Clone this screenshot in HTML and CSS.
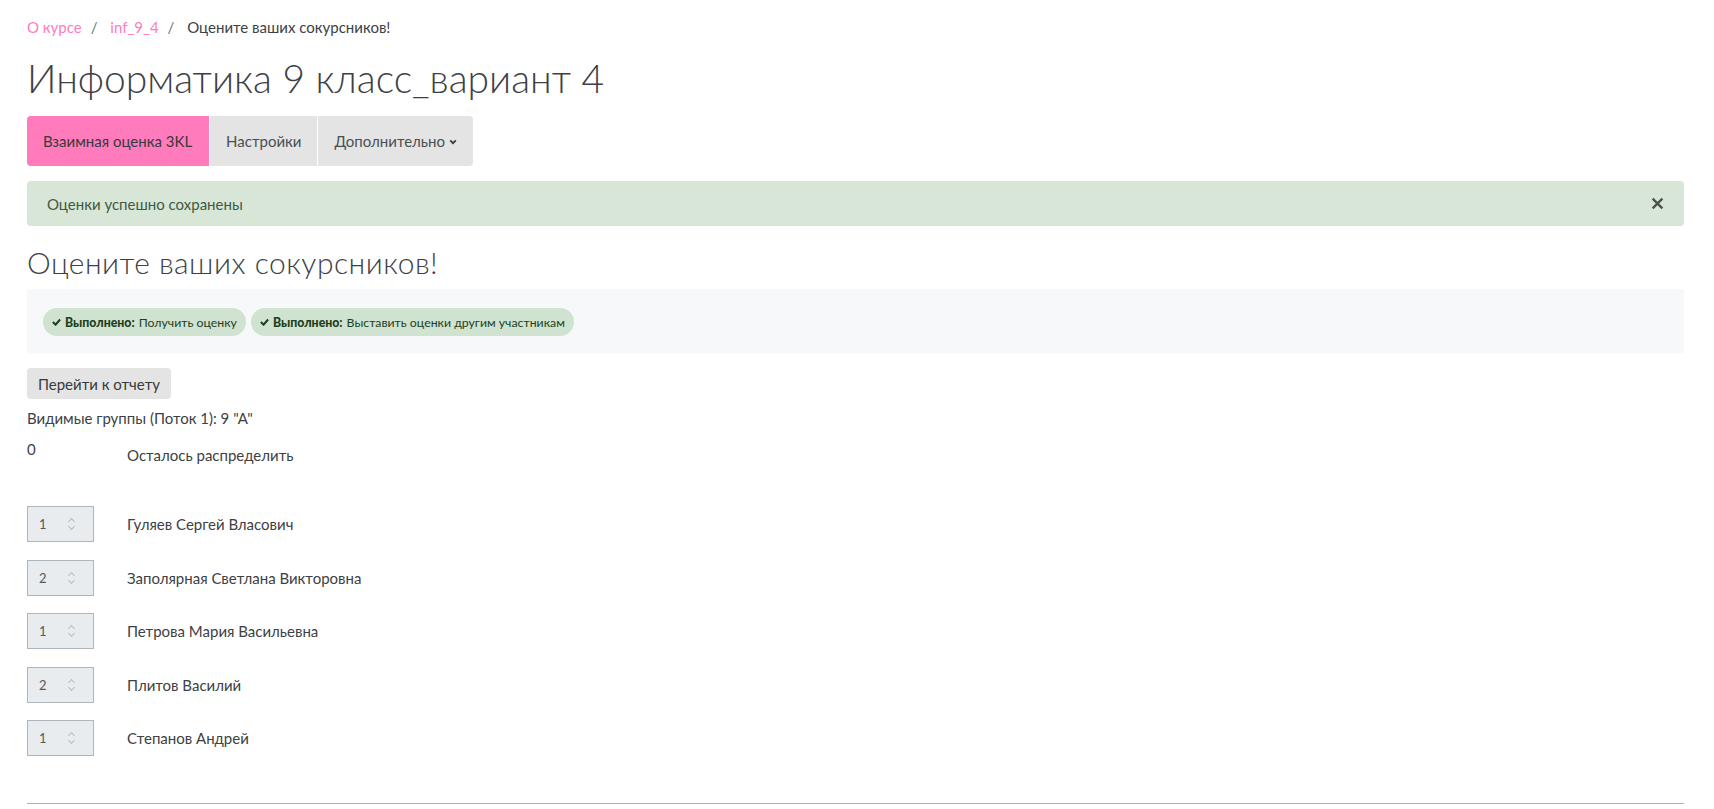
FILE: index.html
```html
<!DOCTYPE html>
<html lang="ru">
<head>
  <meta charset="UTF-8" />
  <title>Информатика 9 класс_вариант 4</title>
  <link rel="stylesheet" href="styles.css">
</head>
<body>
  <div class="page">
    <nav class="crumbs">
      <a href="#">О курсе</a><span class="sep">/</span>
      <a href="#">inf_9_4</a><span class="sep">/</span>
      <span>Оцените ваших сокурсников!</span>
    </nav>

    <h1>Информатика 9 класс_вариант 4</h1>

    <div class="tabs">
      <a class="tab active" href="#">Взаимная оценка 3KL</a>
      <a class="tab" href="#">Настройки</a>
      <a class="tab" href="#">Дополнительно
        <svg class="caret" width="8" height="8" viewBox="0 0 10 10"><path d="M1.5 3 L5 6.5 L8.5 3" fill="none" stroke="#373a3c" stroke-width="2.2"/></svg>
      </a>
    </div>

    <div class="alert">
      <span>Оценки успешно сохранены</span>
      <svg class="close" width="13" height="13" viewBox="0 0 12 12"><path d="M1.5 1.5 L10.5 10.5 M10.5 1.5 L1.5 10.5" stroke="#4d524d" stroke-width="2.2"/></svg>
    </div>

    <h2>Оцените ваших сокурсников!</h2>

    <div class="completion">
      <span class="badge"><svg width="9" height="8" viewBox="0 0 10 8"><path d="M1 4 L4 7 L9 1.2" fill="none" stroke="#1c3f1c" stroke-width="2.2"/></svg><b>Выполнено:</b> Получить оценку</span>
      <span class="badge"><svg width="9" height="8" viewBox="0 0 10 8"><path d="M1 4 L4 7 L9 1.2" fill="none" stroke="#1c3f1c" stroke-width="2.2"/></svg><b>Выполнено:</b> Выставить оценки другим участникам</span>
    </div>

    <button class="btn">Перейти к отчету</button>

    <p class="groups">Видимые группы (Поток 1): 9 "А"</p>

    <div class="remain">
      <div class="col">0</div>
      <div class="label">Осталось распределить</div>
    </div>

    <div class="rows">
      <div class="row">
        <div class="col"><div class="num">1<span class="spin"></span></div></div>
        <div class="label">Гуляев Сергей Власович</div>
      </div>
      <div class="row">
        <div class="col"><div class="num">2<span class="spin"></span></div></div>
        <div class="label">Заполярная Светлана Викторовна</div>
      </div>
      <div class="row">
        <div class="col"><div class="num">1<span class="spin"></span></div></div>
        <div class="label">Петрова Мария Васильевна</div>
      </div>
      <div class="row">
        <div class="col"><div class="num">2<span class="spin"></span></div></div>
        <div class="label">Плитов Василий</div>
      </div>
      <div class="row">
        <div class="col"><div class="num">1<span class="spin"></span></div></div>
        <div class="label">Степанов Андрей</div>
      </div>
    </div>

    <hr>
  </div>
</body>
</html>
```

FILE: styles.css
```css
body { margin: 0; font-family: "Lato", "Liberation Sans", sans-serif; font-size: 15px; color: #3d4145; background: #fff; }
.page { padding: 16px 30px 0 27px; }
a { text-decoration: none; }

.crumbs { line-height: 22px; font-size: 15px; }
.crumbs a { color: #ff7bbc; }
.crumbs .sep { color: #6a737b; margin: 0 9px; }

h1 { font-size: 39px; font-weight: 300; margin: 17px 0 0; line-height: 46px; }

.tabs { display: inline-flex; margin-top: 15px; border-radius: 4px; overflow: hidden; }
.tab { display: flex; align-items: center; gap: 4px; height: 50px; padding: 0 16px; background: #e4e4e4; color: #4a4f53; border-left: 1px solid #fff; }
.tab:first-child { border-left: none; padding-right: 17px; }
.tab.active { background: #ff7bbc; color: #373a3c; }
.caret { margin-top: 2px; }

.alert { display: flex; align-items: center; justify-content: space-between; height: 45px; margin-top: 15px; padding: 0 20px 0 20px; background: #d8e6d8; color: #3f5a3f; border-radius: 4px; }

h2 { font-size: 30px; font-weight: 300; margin: 18px 0 0; line-height: 36px; letter-spacing: 0.5px; }

.completion { display: flex; gap: 5px; margin-top: 9px; height: 64px; padding: 2px 16px 0; box-sizing: border-box; align-items: center; background: #f7f8f9; border-radius: 2px; }
.badge { display: inline-flex; align-items: center; gap: 4px; height: 28px; padding: 0 9px; border-radius: 14px; background: #d0e2d0; color: #1c3f1c; font-size: 12.3px; }
.badge b { font-weight: 900; }

.btn { display: block; margin-top: 15px; height: 31px; padding: 0 11px; border: none; border-radius: 4px; background: #e4e4e4; color: #373a3c; font: inherit; font-size: 15px; }

.groups { margin: 8px 0 0; line-height: 22px; }

.remain { display: flex; margin-top: 11px; }
.remain .col { line-height: 18px; }
.remain .label { line-height: 22px; margin-top: 4px; }
.col { width: 100px; flex: none; }

.rows { margin-top: 40px; }
.row { display: flex; align-items: center; height: 36px; margin-bottom: 17.5px; }
.num { position: relative; box-sizing: border-box; width: 67px; height: 36px; padding-left: 11px; line-height: 34px; background: #e9ecef; border: 1px solid #adb5bd; color: #55595c; font-size: 13px; }
.spin { position: absolute; left: 41px; top: 11px; width: 6px; height: 12px; }
.spin::before, .spin::after { content: ""; position: absolute; left: 0; width: 4px; height: 4px; border-left: 1px solid #b8bcc0; border-top: 1px solid #b8bcc0; }
.spin::before { top: 1px; transform: rotate(45deg); }
.spin::after { bottom: 1px; transform: rotate(-135deg); }

hr { margin: 47px 0 0; border: none; border-top: 1px solid #b0b0b0; }
```
